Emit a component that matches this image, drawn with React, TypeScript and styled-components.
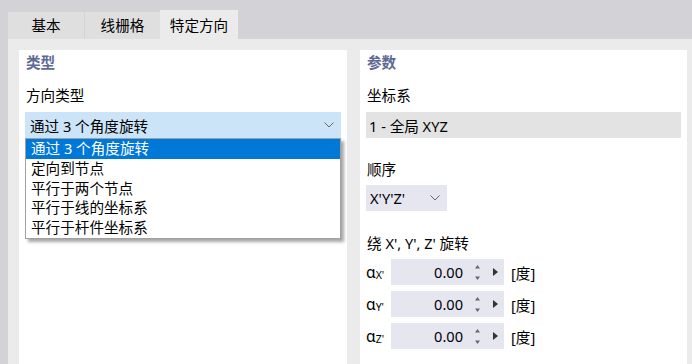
import React from "react";
import styled, {createGlobalStyle} from "styled-components";

const GlobalStyle = createGlobalStyle`
  html, body {
    margin: 0;
    padding: 0;
  }

  body {
    background: #d3d2d7;
    font-family: "Noto Sans", "Noto Sans CJK SC", sans-serif;
    font-size: 14.6px;
    color: #000;
  }
`

const Window = styled.div`
  width: 692px;
  height: 364px;
  box-sizing: border-box;
  padding-left: 8px;
  display: flex;
  flex-direction: column;
  background: #d3d2d7;
  overflow: hidden;
`

const TabBar = styled.div`
  height: 39px;
  flex-shrink: 0;
  display: flex;
  align-items: flex-end;
  gap: 1px;
`

const Tab = styled.div<{ $active?: boolean; $width: number }>`
  width: ${p => p.$width}px;
  height: ${p => p.$active ? 29 : 27}px;
  margin-left: ${p => p.$active ? -1 : 0}px;
  background: ${p => p.$active ? "#ebebeb" : "#dfdfdf"};
  display: flex;
  align-items: flex-end;
  justify-content: center;
  line-height: 27px;
`

const Content = styled.div`
  flex: 1;
  background: #ebebeb;
  padding: 11px 5px 0 11px;
  display: grid;
  grid-template-columns: 328px 327px;
  column-gap: 13px;
`

const Panel = styled.div`
  position: relative;
  background: #fff;
  padding: 3px 6px 0;
  display: flex;
  flex-direction: column;
`

const Heading = styled.div`
  color: #5e6a93;
  font-weight: 700;
  line-height: 18px;
  padding-left: 1px;
`

const Label = styled.div<{ $gap: number }>`
  margin-top: ${p => p.$gap}px;
  line-height: 18px;
  padding-left: 1px;
  color: #000;
`

const Combo = styled.div`
  margin-top: 8px;
  height: 26px;
  background: #cce4f7;
  display: flex;
  align-items: center;
  justify-content: space-between;
  padding: 0 7px 0 5px;
`

const DropList = styled.div`
  position: absolute;
  left: 6px;
  top: 88px;
  width: 316px;
  box-sizing: border-box;
  border: 1px solid #a0a0a0;
  background: #fff;
  box-shadow: 3px 3px 3px rgba(0, 0, 0, 0.35);
  z-index: 2;
`

const DropItem = styled.div<{ $selected?: boolean }>`
  height: 19.8px;
  line-height: 19.8px;
  padding-left: 5px;
  background: ${p => p.$selected ? "#0078d7" : "transparent"};
  color: ${p => p.$selected ? "#fff" : "#000"};
`

const Field = styled.div`
  margin-top: 8px;
  height: 26px;
  background: #e3e3e3;
  display: flex;
  align-items: center;
  padding-left: 3px;
`

const OrderSelect = styled.div`
  margin-top: 7px;
  width: 81px;
  height: 26px;
  box-sizing: border-box;
  background: #e6e6f0;
  display: flex;
  align-items: center;
  justify-content: space-between;
  padding: 0 7px 0 4px;
`

const Rows = styled.div`
  margin-top: 7px;
  display: flex;
  flex-direction: column;
  gap: 6px;
`

const Row = styled.div`
  display: grid;
  grid-template-columns: 25px 113px auto;
  align-items: center;
`

const Alpha = styled.div`
  white-space: nowrap;
  font-size: 15.5px;
`

const Sub = styled.span`
  font-size: 10.5px;
  vertical-align: -1px;
`

const Unit = styled.span`
  margin-left: 7px;
`

const NumBox = styled.div`
  height: 26px;
  background: #e6e6f0;
  display: flex;
  align-items: center;
  padding-right: 6px;
`

const Value = styled.div`
  flex: 1;
  text-align: right;
`

const Spinner = styled.svg`
  margin-left: 12px;
  flex-shrink: 0;
`

const Play = styled.svg`
  margin-left: 13px;
  flex-shrink: 0;
`

const Chevron = () =>
    <svg width="10" height="6" viewBox="0 0 10 6">
        <polyline points="0.5,0.5 5,5 9.5,0.5" fill="none" stroke="#666" strokeWidth="1"/>
    </svg>

const options = ["通过 3 个角度旋转", "定向到节点", "平行于两个节点", "平行于线的坐标系", "平行于杆件坐标系"]

const App: React.FC = () => {
    return <Window>
        <GlobalStyle/>
        <TabBar>
            <Tab $width={76}>基本</Tab>
            <Tab $width={75}>线栅格</Tab>
            <Tab $width={78} $active>特定方向</Tab>
        </TabBar>

        <Content>
            <Panel>
                <Heading>类型</Heading>
                <Label $gap={15}>方向类型</Label>
                <Combo>
                    <span>通过 3 个角度旋转</span>
                    <Chevron/>
                </Combo>
                <DropList>
                    {options.map((o, i) => <DropItem key={o} $selected={i === 0}>{o}</DropItem>)}
                </DropList>
            </Panel>

            <Panel>
                <Heading>参数</Heading>
                <Label $gap={15}>坐标系</Label>
                <Field>1 - 全局 XYZ</Field>
                <Label $gap={22}>顺序</Label>
                <OrderSelect>
                    <span>X'Y'Z'</span>
                    <Chevron/>
                </OrderSelect>
                <Label $gap={23}>绕 X', Y', Z' 旋转</Label>
                <Rows>
                    {["X'", "Y'", "Z'"].map(axis =>
                        <Row key={axis}>
                            <Alpha>α<Sub>{axis}</Sub></Alpha>
                            <NumBox>
                                <Value>0.00</Value>
                                <Spinner width="5" height="15" viewBox="0 0 5 15">
                                    <polygon points="2.5,0 5,3.5 0,3.5" fill="#666"/>
                                    <polygon points="0,11.5 5,11.5 2.5,15" fill="#666"/>
                                </Spinner>
                                <Play width="5" height="8" viewBox="0 0 5 8">
                                    <polygon points="0,0 5,4 0,8" fill="#333"/>
                                </Play>
                            </NumBox>
                            <Unit>[度]</Unit>
                        </Row>
                    )}
                </Rows>
            </Panel>
        </Content>
    </Window>
}

export default App;
